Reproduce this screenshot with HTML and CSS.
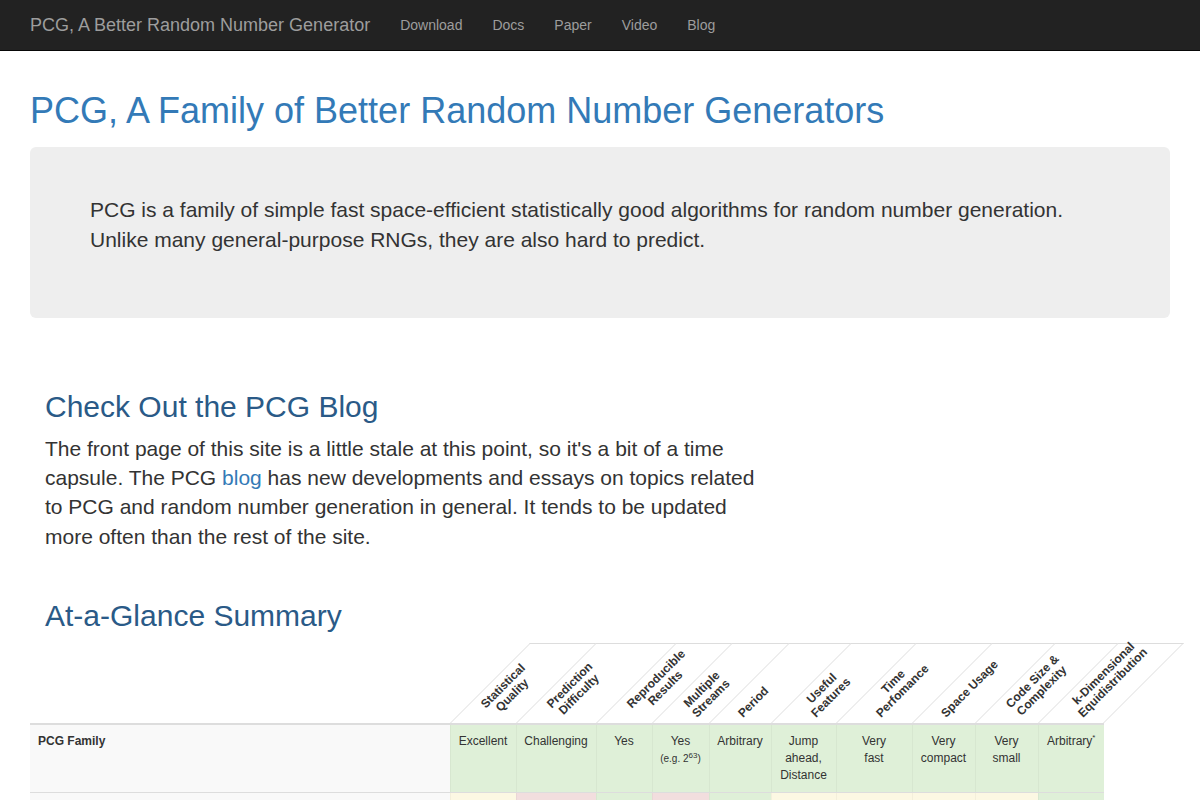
FILE: index.html
```html
<!DOCTYPE html>
<html>
<head>
<title>PCG, A Better Random Number Generator</title>
<link rel="stylesheet" href="styles.css">
</head>
<body>

<div class="navbar">
  <div class="container navbar-inner">
    <a class="brand" href="#">PCG, A Better Random Number Generator</a>
    <ul class="nav">
      <li><a href="#">Download</a></li>
      <li><a href="#">Docs</a></li>
      <li><a href="#">Paper</a></li>
      <li><a href="#">Video</a></li>
      <li><a href="#">Blog</a></li>
    </ul>
  </div>
</div>

<div class="container">
  <h1 class="title">PCG, A Family of Better Random Number Generators</h1>

  <div class="jumbotron">
    <p>PCG is a family of simple fast space-efficient statistically good algorithms for random number generation. Unlike many general-purpose RNGs, they are also hard to predict.</p>
  </div>

  <div class="section blog">
    <h2>Check Out the PCG Blog</h2>
    <p class="lead">The front page of this site is a little stale at this point, so it's a bit of a time capsule. The PCG <a href="#">blog</a> has new developments and essays on topics related to PCG and random number generation in general. It tends to be updated more often than the rest of the site.</p>
  </div>

  <div class="section glance">
    <h2>At-a-Glance Summary</h2>
  </div>

  <table class="summary">
    <colgroup>
      <col class="c-name">
      <col style="width:66px"><col style="width:80px"><col style="width:56px"><col style="width:57px"><col style="width:62px">
      <col style="width:65px"><col style="width:76px"><col style="width:63px"><col style="width:63px"><col style="width:66px">
    </colgroup>
    <thead>
      <tr>
        <th class="blank"></th>
        <th class="rot"><div><span class="two">Statistical<br>Quality</span></div></th>
        <th class="rot"><div><span class="two">Prediction<br>Difficulty</span></div></th>
        <th class="rot"><div><span class="two">Reproducible<br>Results</span></div></th>
        <th class="rot"><div><span class="two">Multiple<br>Streams</span></div></th>
        <th class="rot"><div><span>Period</span></div></th>
        <th class="rot"><div><span class="two">Useful<br>Features</span></div></th>
        <th class="rot"><div><span class="two">Time<br>Perfomance</span></div></th>
        <th class="rot"><div><span>Space Usage</span></div></th>
        <th class="rot"><div><span class="two">Code Size &amp;<br>Complexity</span></div></th>
        <th class="rot last"><div><span class="two">k-Dimensional<br>Equidistribution</span></div></th>
      </tr>
    </thead>
    <tbody>
      <tr>
        <th>PCG Family</th>
        <td class="good">Excellent</td>
        <td class="good">Challenging</td>
        <td class="good">Yes</td>
        <td class="good">Yes<br><small>(e.g. 2<sup>63</sup>)</small></td>
        <td class="good">Arbitrary</td>
        <td class="good">Jump<br>ahead,<br>Distance</td>
        <td class="good">Very<br>fast</td>
        <td class="good">Very<br>compact</td>
        <td class="good">Very<br>small</td>
        <td class="good">Arbitrary<sup>*</sup></td>
      </tr>
      <tr>
        <th>Mersenne Twister</th>
        <td class="fair">Some<br>Failures</td>
        <td class="bad">Trivial</td>
        <td class="good">Yes</td>
        <td class="bad">No</td>
        <td class="good">Huge</td>
        <td class="fair">Jump<br>ahead</td>
        <td class="fair">Acceptable</td>
        <td class="fair">Huge</td>
        <td class="fair">Complex</td>
        <td class="good">623</td>
      </tr>
    </tbody>
  </table>
</div>

</body>
</html>
```

FILE: styles.css
```css
body {
    margin: 0;
    font-family: "Liberation Sans", Arial, Helvetica, sans-serif;
    font-size: 14px;
    line-height: 1.42857;
    color: #333;
    background: #fff;
}
a {
    color: #337ab7;
    text-decoration: none;
}

.container {
    width: 1170px;
    margin: 0 auto;
    padding: 0 15px;
    box-sizing: border-box;
}

/* top bar */
.navbar {
    background: #222;
    border-bottom: 1px solid #080808;
    height: 50px;
}
.navbar-inner {
    display: flex;
    align-items: center;
}
.brand {
    display: block;
    padding: 15px;
    margin-left: -15px;
    font-size: 18px;
    line-height: 20px;
    color: #9d9d9d;
}
.nav {
    display: flex;
    list-style: none;
    margin: 0;
    padding: 0;
}
.nav a {
    display: block;
    padding: 15px;
    line-height: 20px;
    color: #9d9d9d;
}

/* heading + jumbotron */
.title {
    font-size: 36px;
    font-weight: normal;
    line-height: 1.1;
    color: #337ab7;
    margin: 40px 0 16px;
}
.jumbotron {
    background: #eee;
    border-radius: 6px;
    padding: 48px 60px;
    margin-bottom: 30px;
}
.jumbotron p {
    font-size: 21px;
    line-height: 30px;
    margin: 0 0 15px;
}

/* sections */
.section {
    padding: 0 15px;
}
.section h2 {
    font-size: 30px;
    font-weight: normal;
    line-height: 1.1;
    color: #2a5a87;
    margin: 0 0 11px;
}
.blog h2 {
    margin-top: 72px;
}
.glance h2 {
    margin-top: 48px;
}
.lead {
    font-size: 21px;
    line-height: 1.4;
    max-width: 730px;
    margin: 0 0 10px;
}

/* summary table */
.summary {
    border-collapse: collapse;
    table-layout: fixed;
    width: 1074px;
    font-size: 12px;
    line-height: 17px;
    margin-top: 5px;
}
.c-name {
    width: 420px;
}
.summary thead th {
    padding: 0;
    height: 80px;
    vertical-align: bottom;
    border-bottom: 2px solid #ddd;
}
.rot div {
    height: 79px;
    border-top: 1px solid #ddd;
    border-left: 1px solid #ddd;
    transform: skewX(-45deg);
    transform-origin: 0 100%;
    display: flex;
    align-items: flex-end;
}
.rot.last div {
    border-right: 1px solid #ddd;
}
.rot span {
    flex-shrink: 0;
    display: block;
    margin: 0 0 3px 32px;
    font-size: 12px;
    line-height: 13px;
    white-space: nowrap;
    text-align: center;
    color: #333;
    transform: skewX(45deg) rotate(-45deg);
    transform-origin: 0 100%;
}
.rot span.two {
    margin-left: 43px;
}
.summary tbody th {
    text-align: left;
    vertical-align: top;
    padding: 8px;
    background: #f9f9f9;
    border-top: 1px solid #ddd;
    border-bottom: 1px solid #ddd;
}
.summary td {
    text-align: center;
    vertical-align: top;
    padding: 8px 4px;
    border-top: 1px solid #ddd;
    border-bottom: 1px solid #ddd;
    border-left: 1px solid rgba(0, 0, 0, 0.035);
}
.summary small {
    font-size: 10px;
}
.summary sup {
    font-size: 8px;
    line-height: 0;
}
.good {
    background: #dff0d8;
}
.fair {
    background: #fcf8e3;
}
.bad {
    background: #f2dede;
}
```
